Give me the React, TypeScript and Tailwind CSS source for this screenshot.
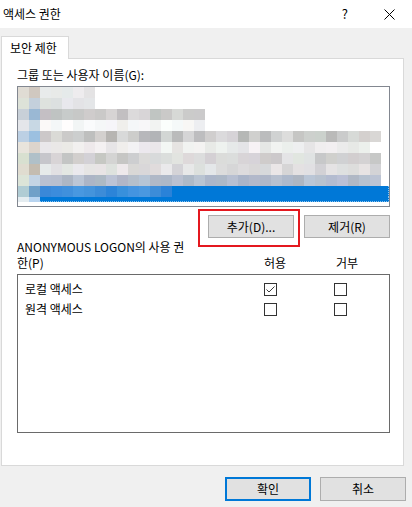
import React from "react";

function lcg(seed: number) {
  let s = seed * 9973 + 17;
  return () => {
    s = (s * 1103515245 + 12345) & 0x7fffffff;
    return s / 0x7fffffff;
  };
}

function grays(n: number, seed: number, min: number, max: number, tint: number[] = [0, 0, 0]) {
  const r = lcg(seed);
  return Array.from({ length: n }, () => {
    const v = Math.round(min + (max - min) * r());
    const j = () => Math.round((r() - 0.5) * 6);
    const c = [v + tint[0] + j(), v + tint[1] + j(), v + tint[2] + j()].map((x) =>
      Math.max(0, Math.min(255, x))
    );
    return `rgb(${c.join(",")})`;
  });
}

const rows: { a: string[]; rest: string[] }[] = [
  { a: ["#e0dcd4", "#d0c8c0"], rest: grays(5, 1, 0xe2, 0xf0) },
  { a: ["#dde2d8", "#c4d0dc"], rest: grays(5, 2, 0xdc, 0xec) },
  { a: ["#c8d0d8", "#9ab8d4"], rest: grays(15, 3, 0xc0, 0xdc) },
  { a: ["#e4e6ea", "#c8d8e4"], rest: grays(15, 4, 0xee, 0xfc) },
  { a: ["#bcd0e4", "#9cc0e0"], rest: grays(31, 5, 0xb4, 0xdc) },
  { a: ["#e8e4dc", "#dcd4cc"], rest: grays(30, 6, 0xe4, 0xf4) },
  { a: ["#d8e0d0", "#b0c0c8"], rest: grays(31, 7, 0xc4, 0xe4) },
  { a: ["#e0dcd0", "#c4bcb0"], rest: grays(31, 8, 0xd4, 0xec) },
  { a: ["#dce4d8", "#c4d4e4"], rest: grays(31, 9, 0xae, 0xc2, [-4, 6, 22]) },
];

const row9Blues = [
  "#3a88d8", "#3c8cdc", "#4090dc", "#4898e0", "#4494dc", "#3c8cd8",
  "#2c84d8", "#3890dc", "#4494e0", "#4a98e0", "#3c8cd8", "#2a82d8",
];

function Cell({ c, h = 11 }: { c: string; h?: number }) {
  return <div className="w-[11px] shrink-0" style={{ backgroundColor: c, height: h }} />;
}

function Checkbox({ checked }: { checked?: boolean }) {
  return (
    <div className="w-[13px] h-[13px] border border-[#333333] bg-white flex items-center justify-center">
      {checked && (
        <svg width="11" height="11" viewBox="0 0 11 11">
          <path d="M1.5 5.5 L4 8 L9.5 2.5" fill="none" stroke="#3c3c3c" strokeWidth="1" />
        </svg>
      )}
    </div>
  );
}

export default function App() {
  return (
    <div className="w-[412px] h-[507px] bg-[#f0f0f0] flex flex-col text-[12px] text-black overflow-hidden font-['Noto_Sans_CJK_KR','Noto_Sans',sans-serif]">
      {/* title bar */}
      <div className="h-[28px] bg-white flex items-center pl-[3px] shrink-0">
        <span className="leading-[16px]">액세스 권한</span>
        <div className="ml-auto flex items-center pr-[17px]">
          <span className="leading-[16px] mr-[36px] text-[13px]">?</span>
          <svg width="11" height="11" viewBox="0 0 11 11">
            <path d="M0.5 0.5 L10.5 10.5 M10.5 0.5 L0.5 10.5" stroke="#000" strokeWidth="1" />
          </svg>
        </div>
      </div>

      {/* tab */}
      <div className="mt-[8px] ml-[1px] w-[68px] h-[23px] border-t border-l border-r border-[#d9d9d9] bg-white relative z-10 -mb-[1px] flex items-center pl-[8px]">
        <span className="leading-[16px]">보안 제한</span>
      </div>

      {/* panel */}
      <div className="ml-[1px] w-[403px] h-[408px] border border-[#d9d9d9] bg-white pl-[15px] pr-[13px] flex flex-col shrink-0">
        <div className="pt-[8px] leading-[16px]">그룹 또는 사용자 이름(G):</div>

        {/* user list */}
        <div className="mt-[3px] w-[373px] h-[121px] border border-[#828790] bg-white flex flex-col">
          {rows.map((r, i) => (
            <div key={i} className="flex">
              {[...r.a, ...r.rest].map((c, k) => (
                <Cell key={k} c={c} />
              ))}
            </div>
          ))}
          <div className="flex">
            <Cell c="#b0ccd4" />
            <Cell c="#70a0c8" />
            {row9Blues.map((c, k) => (
              <Cell key={k} c={c} />
            ))}
            <div className="flex-1 h-[11px] bg-[#0078d7] border-r border-dotted border-[#8cc4ee]" />
          </div>
          <div className="flex">
            <Cell c="#e4ecf0" h={5} />
            <Cell c="#b8d4f0" h={5} />
            <div className="flex-1 h-[5px] bg-[#0078d7] border-r border-b border-dotted border-[#8cc4ee]" />
          </div>
        </div>

        {/* add / remove */}
        <div className="mt-[8px] flex justify-end gap-[10px]">
          <div className="relative">
            <button className="w-[86px] h-[23px] bg-[#e1e1e1] border border-[#adadad] flex items-center justify-center leading-[16px]">
              추가(D)...
            </button>
            <div className="absolute left-[-10px] top-[-6px] w-[102px] h-[38px] border-2 border-[#e4181f] pointer-events-none" />
          </div>
          <button className="w-[86px] h-[23px] bg-[#e1e1e1] border border-[#adadad] flex items-center justify-center leading-[16px]">
            제거(R)
          </button>
        </div>

        {/* permission header */}
        <div className="mt-[1px] grid grid-cols-[247px_72px_1fr] items-end leading-[16px]">
          <div>
            <div>ANONYMOUS LOGON의 사용 권</div>
            <div>한(P)</div>
          </div>
          <div>허용</div>
          <div>거부</div>
        </div>

        {/* permission list */}
        <div className="mt-[3px] w-[373px] h-[159px] border border-[#6a6a6a] bg-white pt-[4px]">
          {[
            { name: "로컬 액세스", allow: true },
            { name: "원격 액세스", allow: false },
          ].map((p) => (
            <div key={p.name} className="h-[20px] grid grid-cols-[246px_70px_1fr] items-center">
              <div className="pl-[7px] leading-[16px]">{p.name}</div>
              <div>
                <Checkbox checked={p.allow} />
              </div>
              <div>
                <Checkbox />
              </div>
            </div>
          ))}
        </div>
      </div>

      {/* bottom buttons */}
      <div className="mt-[11px] flex justify-end gap-[9px] pr-[6px]">
        <button className="w-[86px] h-[24px] bg-[#e1e1e1] border-2 border-[#0078d7] flex items-center justify-center leading-[16px]">
          확인
        </button>
        <button className="w-[86px] h-[24px] bg-[#e1e1e1] border border-[#adadad] flex items-center justify-center leading-[16px]">
          취소
        </button>
      </div>
    </div>
  );
}
